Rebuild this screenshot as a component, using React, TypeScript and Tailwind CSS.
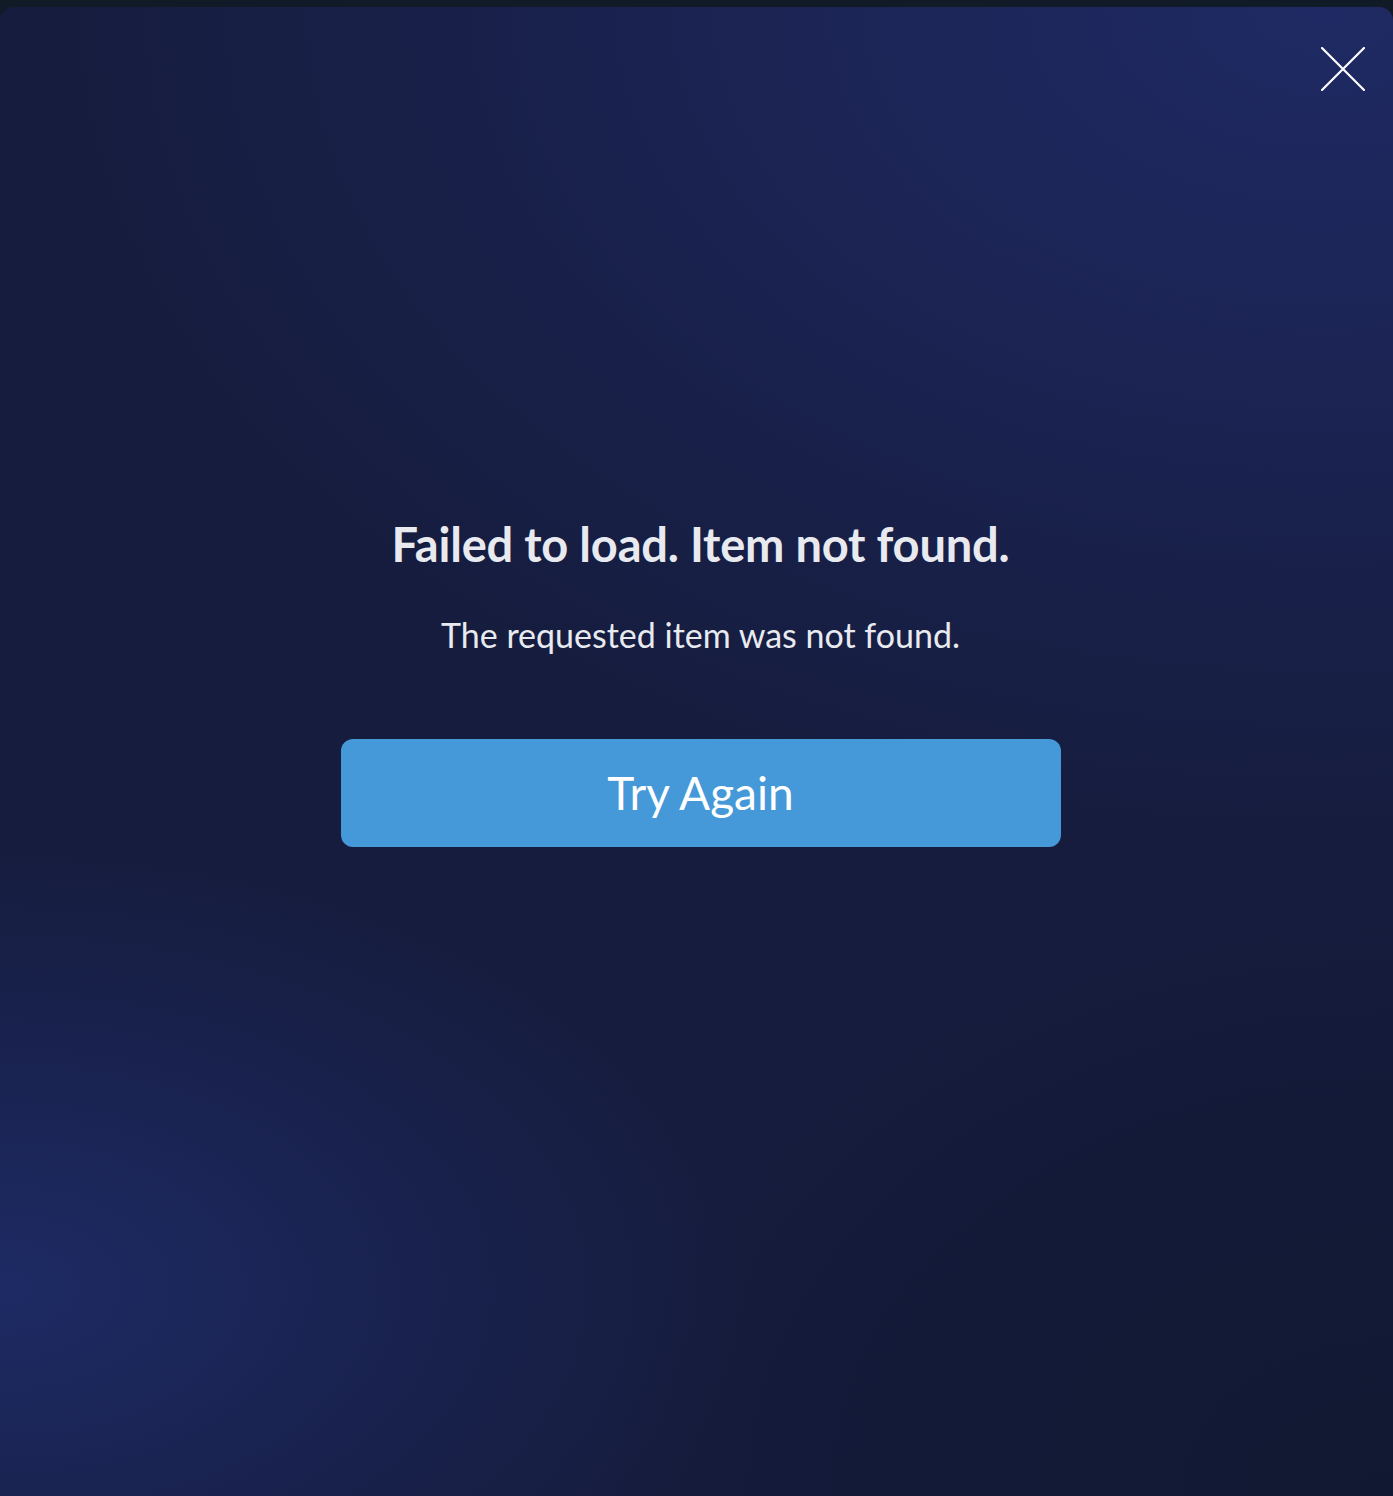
import React from "react";

export default function App() {
  return (
    <div className="w-[1393px] h-[1496px] bg-[#111a27] pt-[7px] overflow-hidden" style={{ fontFamily: "Lato, 'Noto Sans', sans-serif" }}>
      <div className="relative h-[1489px] rounded-t-[14px] overflow-hidden bg-[#151c3d]">
        <div className="absolute inset-0 bg-[radial-gradient(ellipse_1300px_850px_at_95%_0%,#1f2a64_0%,rgba(31,42,100,0.6)_40%,rgba(31,42,100,0)_100%)]" />
        <div className="absolute inset-0 bg-[radial-gradient(ellipse_750px_450px_at_0%_86%,#1e2a64_0%,rgba(30,42,100,0)_100%)]" />
        <div className="absolute inset-0 bg-[radial-gradient(ellipse_800px_600px_at_100%_100%,#111831_0%,rgba(17,24,49,0)_100%)]" />
        <button className="absolute top-[40px] right-[28px] w-[44px] h-[44px]" aria-label="Close">
          <svg width="44" height="44" viewBox="0 0 44 44" fill="none" stroke="white" strokeWidth="2.2" strokeLinecap="round">
            <path d="M1 1L43 43M43 1L1 43" />
          </svg>
        </button>
        <div className="relative flex flex-col items-center pt-[509px] pl-[8px]">
          <h1 className="text-[47px] leading-[56px] font-bold text-[#e8eaf0] tracking-[-0.2px]">Failed to load. Item not found.</h1>
          <p className="mt-[43px] text-[34px] leading-[40px] text-[#e8eaf0]">The requested item was not found.</p>
          <button className="mt-[84px] w-[720px] h-[108px] rounded-[12px] bg-[#4599d8] text-white text-[46px] leading-none">Try Again</button>
        </div>
      </div>
    </div>
  );
}
